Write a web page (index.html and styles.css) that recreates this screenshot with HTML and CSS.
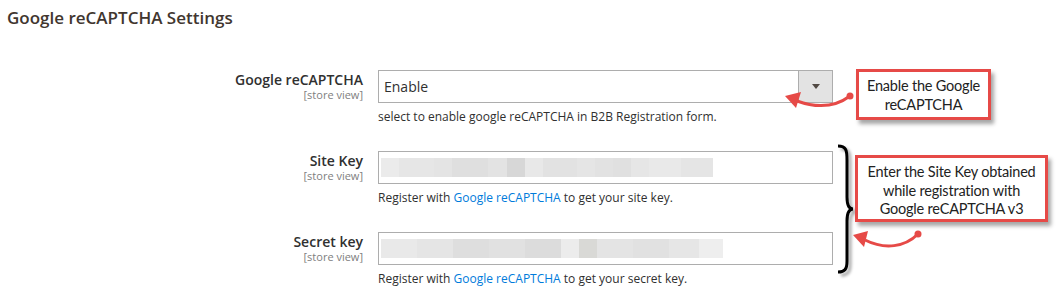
FILE: index.html
```html
<!DOCTYPE html>
<html lang="en">
<head>
    <meta charset="UTF-8">
    <meta name="viewport" content="width=device-width, initial-scale=1.0">
    <title>Google reCAPTCHA Settings</title>
    <link rel="stylesheet" href="styles.css">
</head>
<body>
    <div class="page">
        <h2 class="section-title">Google reCAPTCHA Settings</h2>

        <div class="form">
            <div class="row">
                <div class="label">
                    <span>Google reCAPTCHA</span>
                    <span class="scope">[store view]</span>
                </div>
                <div class="control">
                    <div class="select">
                        <span class="select-value">Enable</span>
                        <span class="select-arrow"></span>
                    </div>
                    <div class="note">select to enable google reCAPTCHA in B2B Registration form.</div>
                </div>
            </div>

            <div class="row">
                <div class="label">
                    <span>Site Key</span>
                    <span class="scope">[store view]</span>
                </div>
                <div class="control">
                    <div class="field"><div class="blur site"></div></div>
                    <div class="note">Register with <a href="#">Google reCAPTCHA</a> to get your site key.</div>
                </div>
            </div>

            <div class="row">
                <div class="label">
                    <span>Secret key</span>
                    <span class="scope">[store view]</span>
                </div>
                <div class="control">
                    <div class="field"><div class="blur secret"></div></div>
                    <div class="note">Register with <a href="#">Google reCAPTCHA</a> to get your secret key.</div>
                </div>
            </div>
        </div>

        <!-- annotations drawn on top of the screenshot -->
        <svg class="marks" width="1058" height="295" viewBox="0 0 1058 295">
            <defs>
                <filter id="shade" x="-50%" y="-10%" width="200%" height="120%">
                    <feDropShadow dx="3" dy="3" stdDeviation="1.6" flood-color="#000" flood-opacity="0.35"/>
                </filter>
            </defs>
            <path d="M838,146 C846,146 847,150 847,160 L847,197 C847,205 849,209 853,209 C849,209 847,213 847,221 L847,261 C847,269 845,272 838,272"
                  fill="none" stroke="#000" stroke-width="3" filter="url(#shade)"/>
            <g fill="#e64a47" stroke="#e64a47">
                <circle cx="850" cy="96" r="3.5" stroke="none"/>
                <path d="M850,96 C838,105 822,110 797,101" fill="none" stroke-width="3"/>
                <polygon points="785,96 801,92 796,108" stroke="none"/>
                <circle cx="918" cy="234" r="3.5" stroke="none"/>
                <path d="M918,234 C905,247 885,250 865,240" fill="none" stroke-width="3"/>
                <polygon points="853,235 868,231 864,247" stroke="none"/>
            </g>
        </svg>

        <div class="callout first">Enable the Google<br>reCAPTCHA</div>
        <div class="callout second">Enter the Site Key obtained<br>while registration with<br>Google reCAPTCHA v3</div>
    </div>
</body>
</html>
```

FILE: styles.css
```css
body {
    margin: 0;
    background-color: #fff;
    font-family: "Open Sans", sans-serif;
    color: #303030;
}

.page {
    position: relative;
    width: 1058px;
    height: 295px;
    overflow: hidden;
}

.section-title {
    margin: 0;
    padding: 9px 0 0 7px;
    font-size: 17px;
    line-height: 18px;
    font-weight: 600;
    color: #41362f;
}

.form {
    padding-top: 43px;
}

.row {
    display: grid;
    grid-template-columns: 363px 455px;
    column-gap: 15px;
    margin-bottom: 26px;
}

.label {
    display: flex;
    flex-direction: column;
    align-items: flex-end;
    padding-top: 2px;
    font-size: 14px;
    line-height: 16px;
    font-weight: 600;
    color: #303030;
}

.label .scope {
    font-size: 11px;
    line-height: 13px;
    font-weight: 400;
    color: #808080;
}

.select,
.field {
    height: 33px;
    box-sizing: border-box;
    border: 1px solid #adadad;
    background-color: #fff;
}

.select {
    display: flex;
    align-items: stretch;
}

.select-value {
    flex: 1;
    padding-left: 5px;
    font-size: 14px;
    line-height: 31px;
    color: #303030;
}

.select-arrow {
    width: 33px;
    border-left: 1px solid #adadad;
    background-color: #e3e3e3;
    display: flex;
    justify-content: center;
    align-items: center;
}

/* petit triangle du select */
.select-arrow::after {
    content: "";
    border-left: 4px solid transparent;
    border-right: 4px solid transparent;
    border-top: 5px solid #514943;
}

.field {
    display: flex;
    align-items: center;
    padding: 0 2px;
}

/* valeurs floutées des clés */
.blur {
    height: 19px;
}

.blur.site {
    width: 332px;
    background: linear-gradient(to right,
        #ebebeb 0 18px, #e6e6e6 18px 53px, #e4e4e4 53px 71px, #dfdfdf 71px 107px,
        #e3e3e3 107px 126px, #d7d7d7 126px 144px, #e8e8e8 144px 162px, #e2e2e2 162px 196px,
        #e5e5e5 196px 214px, #e2e2e2 214px 232px, #e0e0e0 232px 250px, #e6e6e6 250px 268px,
        #e9e9e9 268px 300px, #e5e5e5 300px 332px);
}

.blur.secret {
    width: 342px;
    background: linear-gradient(to right,
        #e9e9e9 0 36px, #e5e5e5 36px 72px, #dedede 72px 108px, #e1e1e1 108px 144px,
        #dcdcdc 144px 180px, #ececec 180px 198px, #d9d9d6 198px 216px, #e4e4e4 216px 252px,
        #e1e1e1 252px 288px, #e6e6e6 288px 318px, #eeeeee 318px 342px);
}

.note {
    margin-top: 5px;
    font-size: 12px;
    line-height: 17px;
    color: #303030;
}

.note a {
    color: #007bdb;
    text-decoration: none;
}

.marks {
    position: absolute;
    top: 0;
    left: 0;
    pointer-events: none;
}

.callout {
    position: absolute;
    box-sizing: border-box;
    border: 3px solid #e64a47;
    background-color: #fff;
    box-shadow: 3px 4px 4px rgba(0, 0, 0, 0.35);
    font-family: Lato, sans-serif;
    font-size: 14.5px;
    line-height: 18.5px;
    letter-spacing: -0.2px;
    color: #222;
    text-align: center;
    white-space: nowrap;
}

.callout.first {
    left: 856px;
    top: 69px;
    width: 135px;
    height: 51px;
    padding-top: 5px;
}

.callout.second {
    left: 855px;
    top: 155px;
    width: 193px;
    height: 67px;
    padding-top: 5px;
}
```
